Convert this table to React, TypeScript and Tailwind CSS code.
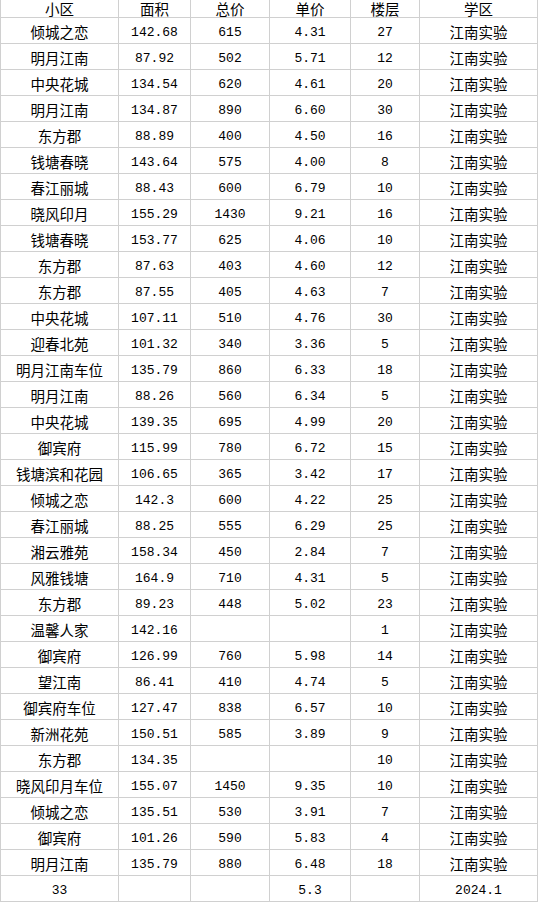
import React from "react";

type Row = [string, string, string, string, string, string];

const rows: Row[] = [
  ["倾城之恋", "142.68", "615", "4.31", "27", "江南实验"],
  ["明月江南", "87.92", "502", "5.71", "12", "江南实验"],
  ["中央花城", "134.54", "620", "4.61", "20", "江南实验"],
  ["明月江南", "134.87", "890", "6.60", "30", "江南实验"],
  ["东方郡", "88.89", "400", "4.50", "16", "江南实验"],
  ["钱塘春晓", "143.64", "575", "4.00", "8", "江南实验"],
  ["春江丽城", "88.43", "600", "6.79", "10", "江南实验"],
  ["晓风印月", "155.29", "1430", "9.21", "16", "江南实验"],
  ["钱塘春晓", "153.77", "625", "4.06", "10", "江南实验"],
  ["东方郡", "87.63", "403", "4.60", "12", "江南实验"],
  ["东方郡", "87.55", "405", "4.63", "7", "江南实验"],
  ["中央花城", "107.11", "510", "4.76", "30", "江南实验"],
  ["迎春北苑", "101.32", "340", "3.36", "5", "江南实验"],
  ["明月江南车位", "135.79", "860", "6.33", "18", "江南实验"],
  ["明月江南", "88.26", "560", "6.34", "5", "江南实验"],
  ["中央花城", "139.35", "695", "4.99", "20", "江南实验"],
  ["御宾府", "115.99", "780", "6.72", "15", "江南实验"],
  ["钱塘滨和花园", "106.65", "365", "3.42", "17", "江南实验"],
  ["倾城之恋", "142.3", "600", "4.22", "25", "江南实验"],
  ["春江丽城", "88.25", "555", "6.29", "25", "江南实验"],
  ["湘云雅苑", "158.34", "450", "2.84", "7", "江南实验"],
  ["风雅钱塘", "164.9", "710", "4.31", "5", "江南实验"],
  ["东方郡", "89.23", "448", "5.02", "23", "江南实验"],
  ["温馨人家", "142.16", "", "", "1", "江南实验"],
  ["御宾府", "126.99", "760", "5.98", "14", "江南实验"],
  ["望江南", "86.41", "410", "4.74", "5", "江南实验"],
  ["御宾府车位", "127.47", "838", "6.57", "10", "江南实验"],
  ["新洲花苑", "150.51", "585", "3.89", "9", "江南实验"],
  ["东方郡", "134.35", "", "", "10", "江南实验"],
  ["晓风印月车位", "155.07", "1450", "9.35", "10", "江南实验"],
  ["倾城之恋", "135.51", "530", "3.91", "7", "江南实验"],
  ["御宾府", "101.26", "590", "5.83", "4", "江南实验"],
  ["明月江南", "135.79", "880", "6.48", "18", "江南实验"],
];

const header: Row = ["小区", "面积", "总价", "单价", "楼层", "学区"];
const footer: Row = ["33", "", "", "5.3", "", "2024.1"];

const cjk = "font-['Noto_Sans_CJK_SC','Noto_Sans_CJK_JP',sans-serif] text-[14.5px]";
const mono = "font-['Liberation_Mono','DejaVu_Sans_Mono',monospace] text-[13px]";

function isCjk(s: string) {
  return /[\u4e00-\u9fff]/.test(s);
}

function Cell({ text, head }: { text: string; head?: boolean }) {
  const font = isCjk(text) ? cjk : mono;
  return (
    <div
      className={
        "flex items-center justify-center border-r border-b border-[#d0d0d0] text-black leading-none whitespace-nowrap " +
        (head ? "h-[18px] pt-[1px] " : "h-[26px] pt-[3px] ") +
        font
      }
    >
      {text}
    </div>
  );
}

export default function App() {
  return (
    <div className="w-[539px] h-[905px] bg-white overflow-hidden">
      <div className="w-[538px] grid grid-cols-[118px_72px_79px_81px_69px_118px] border-l border-[#d0d0d0]">
        {header.map((t, i) => (
          <Cell key={"h" + i} text={t} head />
        ))}
        {rows.map((r, ri) =>
          r.map((t, ci) => <Cell key={ri + "-" + ci} text={t} />)
        )}
        {footer.map((t, i) => (
          <Cell key={"f" + i} text={t} />
        ))}
      </div>
    </div>
  );
}
